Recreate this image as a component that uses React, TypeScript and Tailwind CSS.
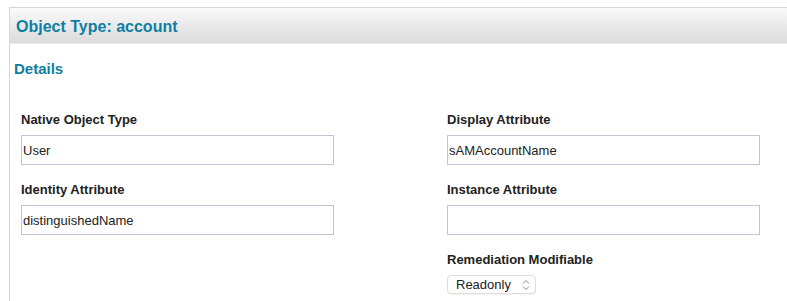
import React from "react";

const fields = [
  { label: "Native Object Type", value: "User" },
  { label: "Display Attribute", value: "sAMAccountName" },
  { label: "Identity Attribute", value: "distinguishedName" },
  { label: "Instance Attribute", value: "" },
];

function Field({ label, value }: { label: string; value: string }) {
  return (
    <div className="flex flex-col h-[70px]">
      <label className="text-[13px] leading-[16px] font-bold text-[#222]">
        {label}
      </label>
      <input
        readOnly
        value={value}
        className="mt-[7px] w-[313px] h-[30px] border border-[#c3c3d8] bg-white px-[1px] text-[13px] text-[#222] outline-none"
      />
    </div>
  );
}

export default function App() {
  return (
    <div
      className="w-[787px] h-[301px] bg-white overflow-hidden pt-[7px] pl-[9px]"
      style={{ fontFamily: '"Liberation Sans", Arial, sans-serif' }}
    >
      <div className="h-full border-l border-t border-[#d6d6d6]">
        {/* header */}
        <div className="h-[36px] flex items-center pl-[6px] pt-[2px] bg-gradient-to-b from-[#fafafa] to-[#dbdbdb] border-b border-[#ececec]">
          <h1 className="text-[16px] font-bold text-[#0f7ea3]">
            Object Type: account
          </h1>
        </div>

        {/* details */}
        <div className="pt-[16px] pl-[4px]">
          <h2 className="text-[15px] leading-[18px] font-bold text-[#0f7ea3]">
            Details
          </h2>
        </div>

        <div className="grid grid-cols-[426px_1fr] pl-[11px] mt-[34px]">
          {fields.map((f) => (
            <Field key={f.label} label={f.label} value={f.value} />
          ))}
          <div />
          <div className="flex flex-col">
            <label className="text-[13px] leading-[16px] font-bold text-[#222]">
              Remediation Modifiable
            </label>
            <div className="mt-[7px] w-[89px] h-[19px] rounded-[4px] border border-[#dedede] bg-white flex items-center justify-between pl-[8px] pr-[5px] shadow-[0_1px_1px_rgba(0,0,0,0.05)]">
              <span className="text-[13px] text-[#222]">Readonly</span>
              <svg width="8" height="12" viewBox="0 0 8 12" fill="none">
                <path d="M1 4.5 L4 1.5 L7 4.5" stroke="#888" strokeWidth="1" />
                <path d="M1 7.5 L4 10.5 L7 7.5" stroke="#888" strokeWidth="1" />
              </svg>
            </div>
          </div>
        </div>
      </div>
    </div>
  );
}
